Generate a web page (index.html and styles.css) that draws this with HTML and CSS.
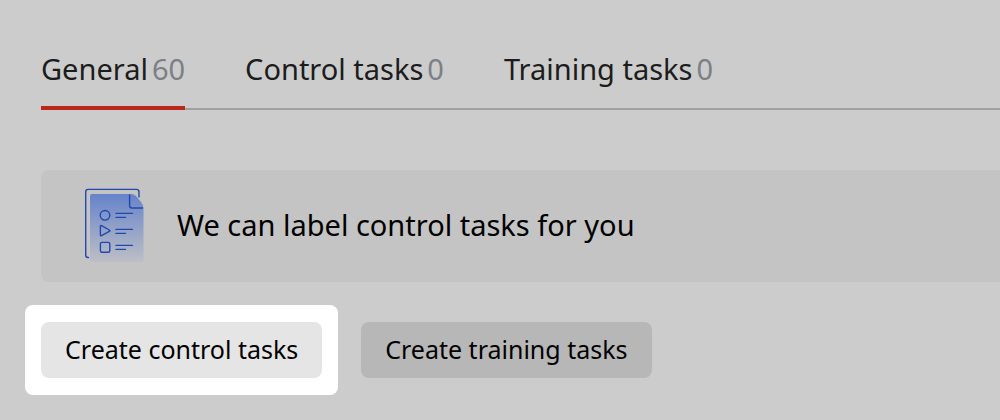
FILE: index.html
```html
<!DOCTYPE html>
<html lang="en">
<head>
<meta charset="utf-8">
<title>Tasks</title>
<link rel="stylesheet" href="styles.css">
</head>
<body>
<main class="page">
  <nav class="tabs" aria-label="Task types">
    <a class="tab tab-active" href="#general" aria-current="page">General <span class="count">60</span></a>
    <a class="tab" href="#control">Control tasks <span class="count">0</span></a>
    <a class="tab" href="#training">Training tasks <span class="count">0</span></a>
  </nav>
  <section class="banner">
    <svg class="banner-icon" viewBox="0 0 60 76" fill="none" aria-hidden="true">
      <defs>
        <linearGradient id="sheet" x1="0" y1="0" x2="0" y2="1">
          <stop offset="0" stop-color="#6683ca"/>
          <stop offset="1" stop-color="#bdbfc6"/>
        </linearGradient>
      </defs>
      <path d="M8 6H47Q50 6 52 8L57 14Q59.500 17 59.500 20V72Q59.500 74 57.500 74H8Q6 74 6 72V8Q6 6 8 6Z" fill="url(#sheet)"/>
      <g stroke="#2048ad" stroke-width="1.400" stroke-linecap="round" stroke-linejoin="round">
        <path d="M4.500 69.500H4Q1.700 69.500 1.700 67V4Q1.700 1.400 4 1.400H52.500Q55 1.400 55 4V9"/>
        <path d="M45.600 7V17.500Q45.600 20 48 20H58.500"/>
        <circle cx="21" cy="27.300" r="4.800"/>
        <path d="M16.400 38.300Q16.400 37 17.500 37.600L25.300 42Q26.500 42.700 25.300 43.300L17.500 47.700Q16.400 48.300 16.400 47Z"/>
        <rect x="16.400" y="54.400" width="9.400" height="9.800" rx="1.500"/>
        <path d="M32 25.400H48.500M32 29.400H41.500M32 41.400H48.500M32 45.400H41.500M32 57.400H48.500M32 61.400H41.500"/>
      </g>
    </svg>
    <p class="banner-text">We can label control tasks for you</p>
  </section>
  <div class="actions">
    <div class="spotlight"><button class="button button-lit" type="button">Create control tasks</button></div>
    <button class="button" type="button">Create training tasks</button>
  </div>
</main>
</body>
</html>
```
FILE: styles.css
```css
* {
  box-sizing: border-box;
}

body {
  margin: 0;
  background: #ccc;
  color: #000;
  font-family: "Noto Sans", "Open Sans", sans-serif;
}

.page {
  padding: 46px 0 24px 25px;
}

.tabs {
  display: flex;
  gap: 60px;
  margin-left: 16px;
  border-bottom: 2px solid #a0a0a0;
}

.tab {
  display: flex;
  gap: 4px;
  margin-bottom: -2px;
  padding-bottom: 14px;
  border-bottom: 4px solid transparent;
  color: #1c1c1c;
  font-size: 29px;
  line-height: 46px;
  white-space: nowrap;
  text-decoration: none;
}

.tab-active {
  border-color: #bc271a;
}

.count {
  color: #7b7f86;
}

.banner {
  display: flex;
  align-items: center;
  gap: 33px;
  margin: 60px 0 23px 16px;
  padding: 18px 43px;
  border-radius: 8px 0 0 8px;
  background: #c4c4c4;
}

.banner-icon {
  flex: none;
  width: 60px;
  height: 76px;
}

.banner-text {
  margin: 0;
  padding-bottom: 2px;
  font-size: 29px;
  line-height: 40px;
}

.actions {
  display: flex;
  align-items: center;
  gap: 23px;
}

.spotlight {
  padding: 17px 16px;
  border-radius: 8px;
  background: #fff;
}

.button {
  padding: 7px 24px 9px;
  border: 0;
  border-radius: 8px;
  background: #b7b7b7;
  color: #000;
  font-family: inherit;
  font-size: 25px;
  line-height: 40px;
  white-space: nowrap;
}

.button-lit {
  display: block;
  background: #e5e5e5;
}
```
